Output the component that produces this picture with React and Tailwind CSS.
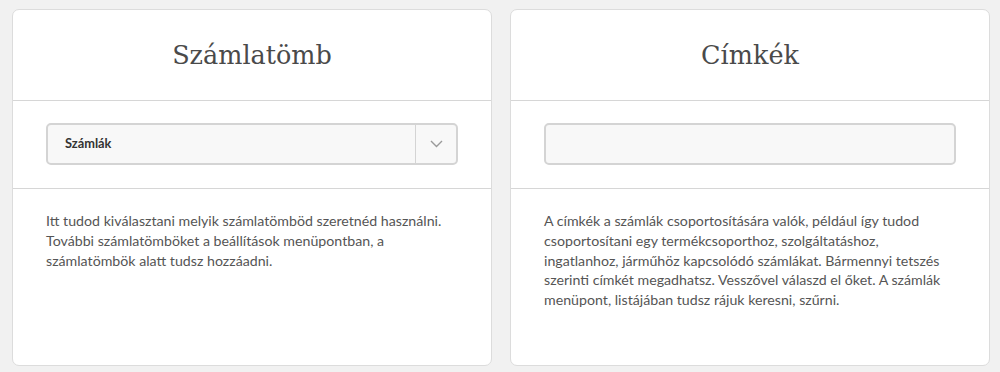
import React from "react";

const body = { fontFamily: "Lato, 'Noto Sans', sans-serif" };
const slab = { fontFamily: "'DejaVu Serif', serif" };

function Card({ title, children, text }) {
  return (
    <div className="w-[480px] h-[357px] bg-white border border-[#dcdcdc] rounded-[7px] flex flex-col overflow-hidden">
      <div className="h-[91px] flex items-center justify-center border-b border-[#d6d6d6]">
        <h2 className="text-[25.5px] font-light text-[#4a4a4a]" style={slab}>{title}</h2>
      </div>
      <div className="h-[88px] px-[33px] pt-[22px] border-b border-[#d6d6d6]">{children}</div>
      <div className="px-[33px] pt-[22px] text-[14.2px] leading-[19.8px] text-[#555]" style={body}>
        {text}
      </div>
    </div>
  );
}

export default function App() {
  return (
    <div className="w-[1000px] h-[372px] bg-[#f1f1f1] flex gap-[18px] pl-[12px] pt-[9px]">
      <Card
        title="Számlatömb"
        text={
          <>
            Itt tudod kiválasztani melyik számlatömböd szeretnéd használni.
            <br />
            További számlatömböket a beállítások menüpontban, a
            <br />
            számlatömbök alatt tudsz hozzáadni.
          </>
        }
      >
        <div className="h-[42px] flex bg-[#f8f8f8] border-2 border-[#d4d4d4] rounded-[5px]">
          <div className="flex-1 flex items-center pl-[17px] text-[12.8px] font-bold text-[#333]" style={body}>
            Számlák
          </div>
          <div className="w-[41px] border-l border-[#d4d4d4] flex items-center justify-center">
            <svg width="13" height="8" viewBox="0 0 13 8" fill="none">
              <path d="M1 1l5.5 5.5L12 1" stroke="#9a9a9a" strokeWidth="1.4" />
            </svg>
          </div>
        </div>
      </Card>
      <Card
        title="Címkék"
        text={
          <>
            A címkék a számlák csoportosítására valók, például így tudod
            <br />
            csoportosítani egy termékcsoporthoz, szolgáltatáshoz,
            <br />
            ingatlanhoz, járműhöz kapcsolódó számlákat. Bármennyi tetszés
            <br />
            szerinti címkét megadhatsz. Vesszővel válaszd el őket. A számlák
            <br />
            menüpont, listájában tudsz rájuk keresni, szűrni.
          </>
        }
      >
        <div className="h-[42px] bg-[#f8f8f8] border-2 border-[#d4d4d4] rounded-[5px]" />
      </Card>
    </div>
  );
}
